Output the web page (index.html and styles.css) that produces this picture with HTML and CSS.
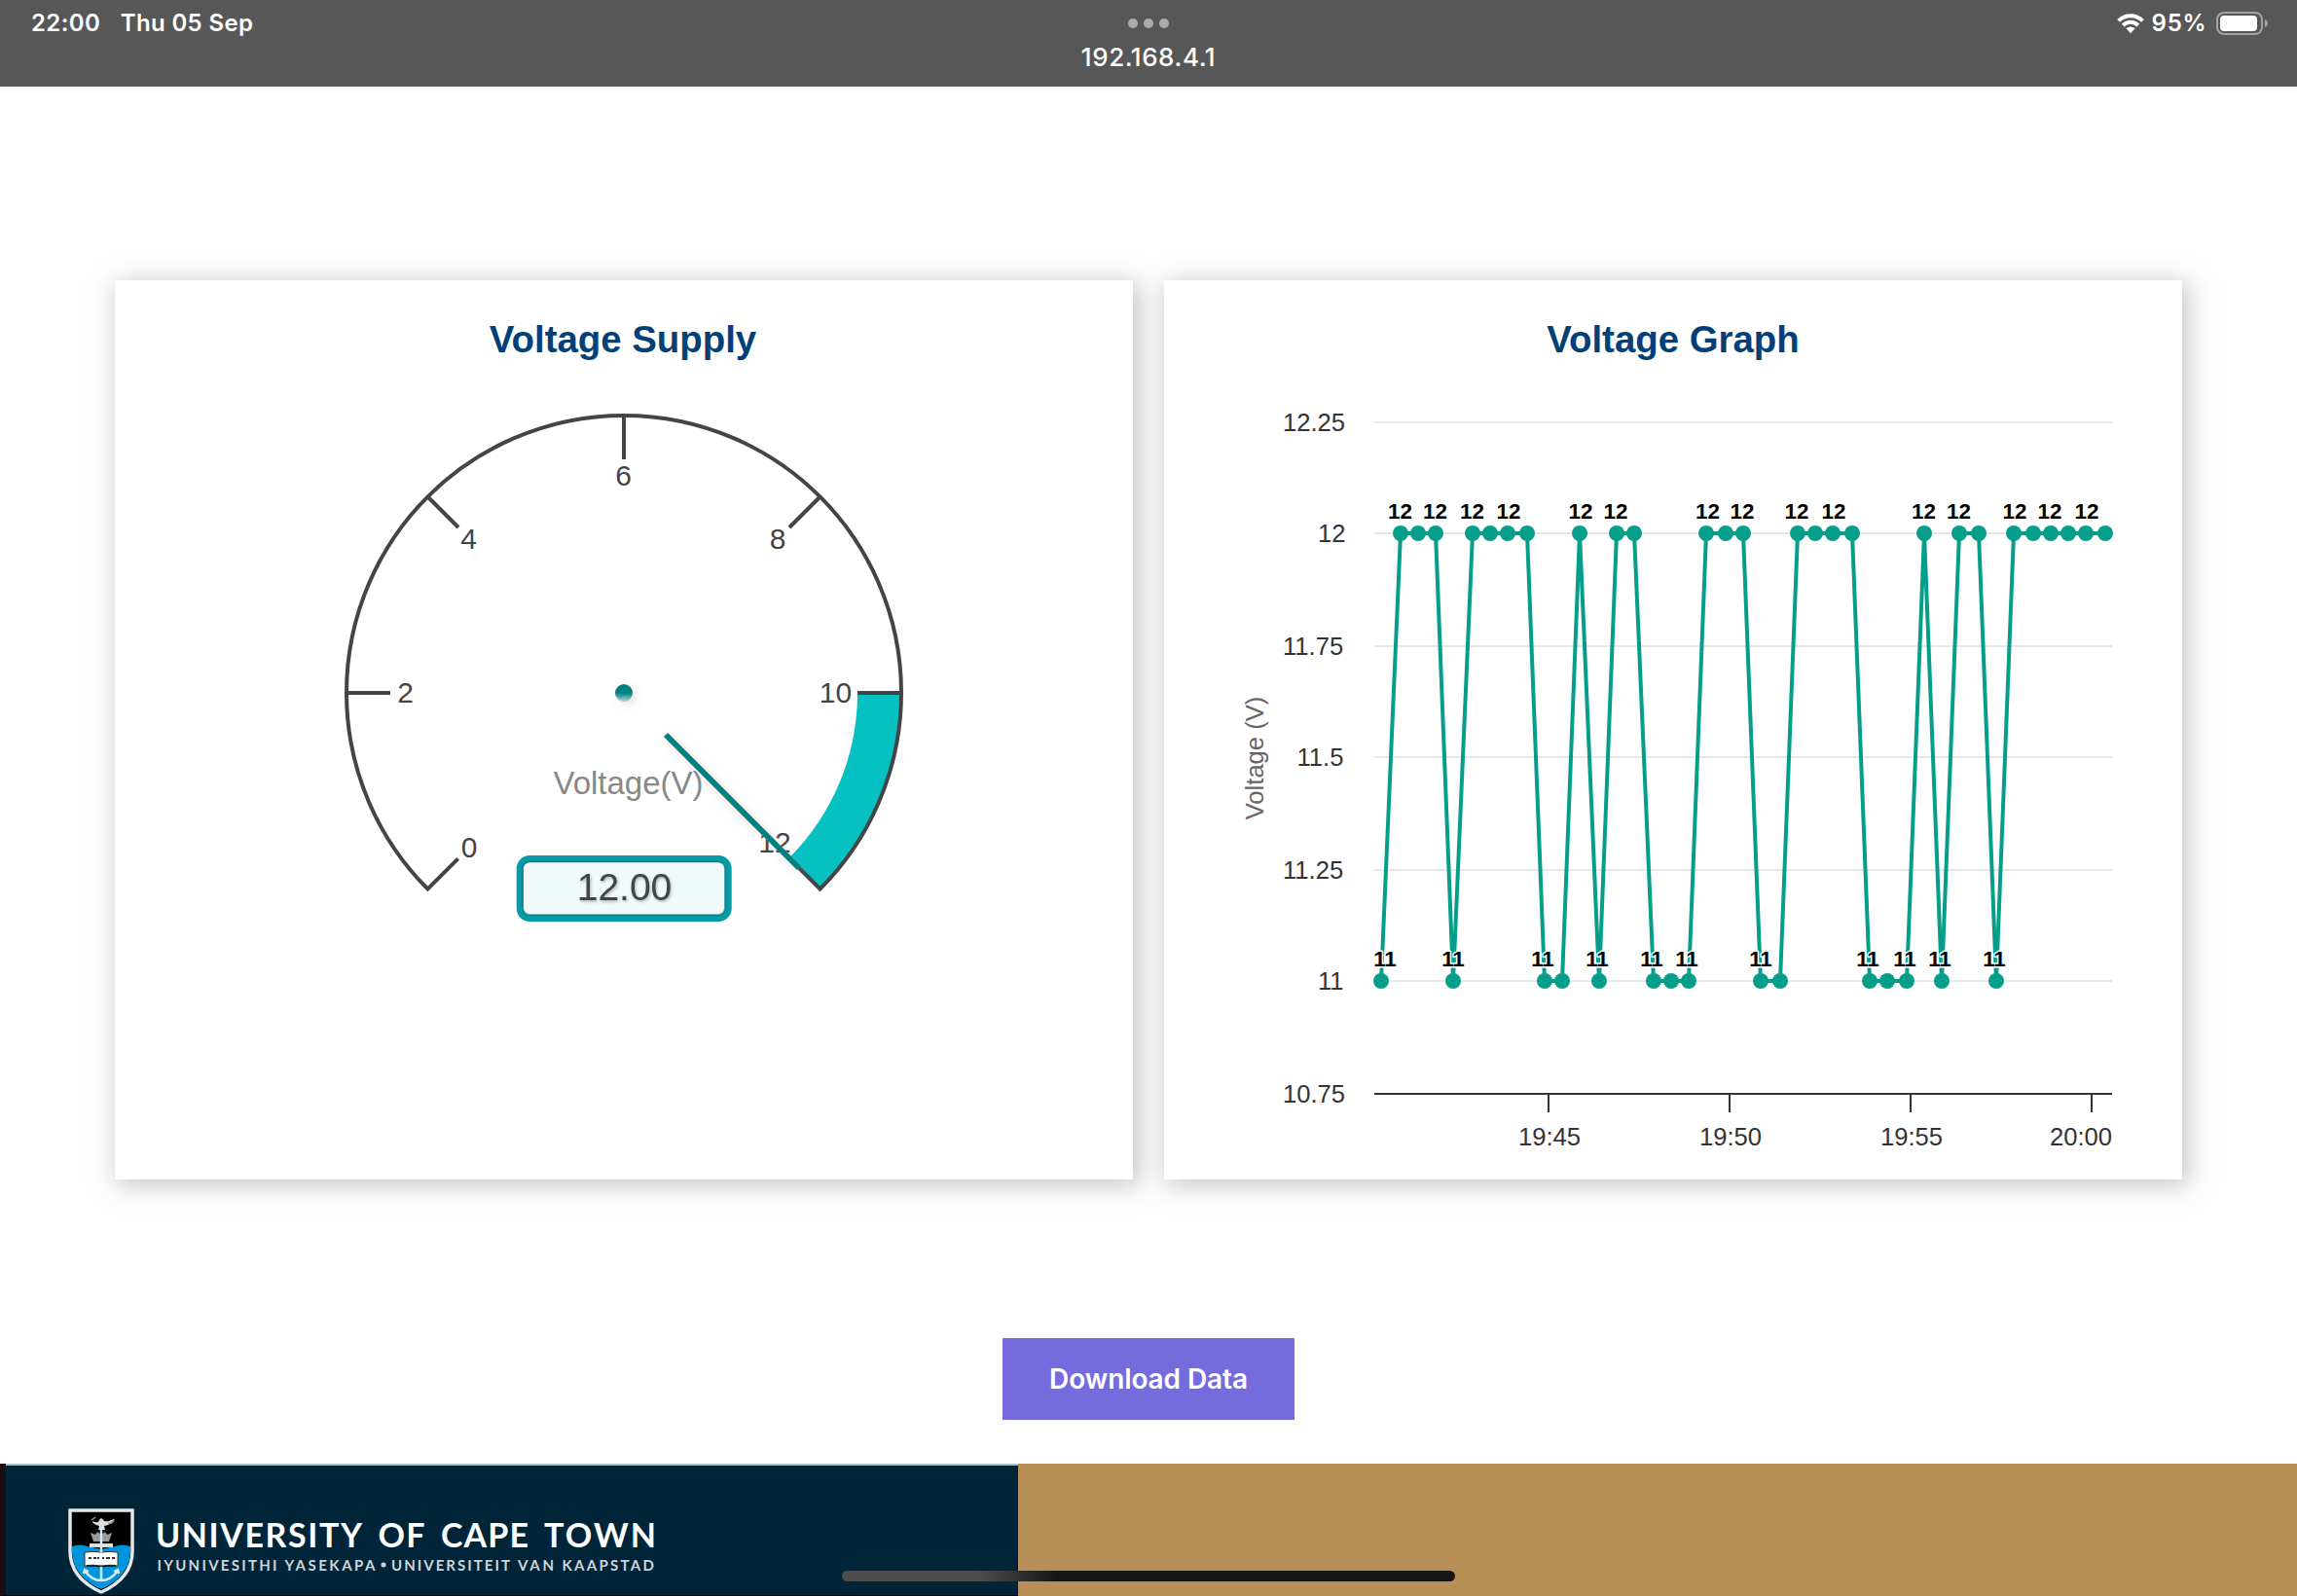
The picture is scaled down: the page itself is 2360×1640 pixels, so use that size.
FILE: index.html
```html
<!DOCTYPE html>
<html lang="en">
<head>
<meta charset="utf-8">
<title>Voltage Monitor</title>
<link rel="stylesheet" href="styles.css">
</head>
<body>
<header class="topbar">
  <div class="status-left"><span class="clock">22:00</span><span class="date">Thu 05 Sep</span></div>
  <div class="status-center">
    <div class="dots"><i></i><i></i><i></i></div>
    <div class="address">192.168.4.1</div>
  </div>
  <div class="status-right">
    <svg class="wifi" width="28" height="21" viewBox="0 0 28 21">
      <g fill="none" stroke="#fff" stroke-width="4">
        <path d="M1.6 7.3A17.6 17.6 0 0 1 26.4 7.3"/>
        <path d="M6.2 12A11 11 0 0 1 21.8 12"/>
      </g>
      <path fill="#fff" d="M9.4 15.3a6.5 6.5 0 0 1 9.2 0L14 20.2z"/>
    </svg>
    <span class="percent">95%</span>
    <svg class="battery" width="54" height="24" viewBox="0 0 54 24">
      <rect x="1" y="1" width="46" height="22" rx="7" fill="none" stroke="#a3a3a3" stroke-width="2"/>
      <rect x="4" y="4" width="38" height="16" rx="4" fill="#fff"/>
      <path d="M50 8c4 1.5 4 6.500 0 8z" fill="#a3a3a3"/>
    </svg>
  </div>
</header>

<main class="content">
  <div class="cards">
    <section class="card">
      <h2 class="card-title title-supply">Voltage Supply</h2>
      <svg class="plot" width="1046" height="812" viewBox="118 400 1046 812">
        <defs>
          <linearGradient id="pivot" x1="0" y1="0" x2="0" y2="1">
            <stop offset="0" stop-color="#008080"/><stop offset=".5" stop-color="#008080"/><stop offset="1" stop-color="#b5d6d6"/>
          </linearGradient>
          <filter id="soft" filterUnits="userSpaceOnUse" x="600" y="680" width="260" height="240">
            <feDropShadow dx="3" dy="3" stdDeviation="4" flood-color="#bc8f8f" flood-opacity=".3"/>
          </filter>
          <filter id="textShadow"><feDropShadow dx="1" dy="1.500" stdDeviation="1.5" flood-color="#000" flood-opacity=".3"/></filter>
          <filter id="edge" filterUnits="userSpaceOnUse" x="534" y="882" width="214" height="62"><feGaussianBlur stdDeviation=".8"/></filter>
        </defs>
        <path d="M881 712H926A285 285 0 0 1 842.500 913.500L810.700 881.700A240 240 0 0 0 881 712Z" fill="#05c1c2"/>
        <g fill="none" stroke="#444" stroke-width="4">
          <path d="M470.600 882.400L439.500 913.500A285 285 0 1 1 842.500 913.500L811 882"/>
          <path d="M356 712H401M439.500 510.500L471 542M641 427V472M842.500 510.500L811 542M926 712H881"/>
        </g>
        <g class="gauge-label">
          <text x="482" y="881">0</text><text x="416.500" y="722">2</text><text x="481.700" y="563.500">4</text>
          <text x="640.500" y="498.500">6</text><text x="799" y="563.500">8</text><text x="858.500" y="722">10</text><text x="796" y="875.700">12</text>
        </g>
        <text class="gauge-unit" x="568.500" y="815.700" textLength="154">Voltage(V)</text>
        <g filter="url(#soft)">
          <path d="M684 755L821 892" stroke="#008080" stroke-width="6"/>
          <circle cx="641" cy="712" r="9" fill="url(#pivot)"/>
        </g>
        <rect x="534.200" y="882.500" width="214" height="61" rx="10" fill="#f1fafb" stroke="#069ca6" stroke-width="7"/>
        <rect x="537.700" y="886" width="206.600" height="53.500" rx="6.500" fill="none" stroke="#04616b" stroke-width="1.500" filter="url(#edge)"/>
        <rect x="538" y="886.500" width="206" height="52.500" rx="6" fill="#f1fafb"/>
        <text class="gauge-value" x="641.500" y="925" filter="url(#textShadow)">12.00</text>
      </svg>
    </section>

    <section class="card">
      <h2 class="card-title">Voltage Graph</h2>
      <svg class="plot" width="1046" height="812" viewBox="1196 400 1046 812">
        <path d="M1412 434H2170M1412 548H2170M1412 664H2170M1412 778H2170M1412 894H2170M1412 1008H2170" stroke="#e6e6e6" stroke-width="2"/>
        <path d="M1412 1124H2170M1591 1124V1143M1777 1124V1143M1963 1124V1143M2149 1124V1143" stroke="#333" stroke-width="2"/>
        <defs>
          <marker id="dot" markerUnits="userSpaceOnUse" markerWidth="16" markerHeight="16" refX="8" refY="8"><circle cx="8" cy="8" r="8" fill="#059e8a"/></marker>
        </defs>
        <polyline class="series" points="1419,1008 1439,548 1457,548 1475,548 1493,1008 1513,548 1531,548 1549,548 1569,548 1587,1008 1605,1008 1623,548 1643,1008 1661,548 1679,548 1699,1008 1717,1008 1735,1008 1753,548 1773,548 1791,548 1809,1008 1829,1008 1847,548 1865,548 1883,548 1903,548 1921,1008 1939,1008 1959,1008 1977,548 1995,1008 2013,548 2033,548 2051,1008 2069,548 2089,548 2107,548 2125,548 2143,548 2163,548"/>
        <g class="axis-label">
          <text x="1318" y="443">12.25</text><text x="1354" y="557">12</text><text x="1318" y="673">11.75</text><text x="1332.500" y="787">11.5</text>
          <text x="1318" y="903">11.25</text><text x="1354" y="1017">11</text><text x="1318" y="1133">10.75</text>
          <text x="1560" y="1177">19:45</text><text x="1746" y="1177">19:50</text><text x="1932" y="1177">19:55</text><text x="2106" y="1177">20:00</text>
        </g>
        <text class="axis-title" transform="translate(1298 779) rotate(-90)">Voltage (V)</text>
        <g class="point-label">
          <text x="1438.500" y="533">12</text><text x="1474.500" y="533">12</text><text x="1512.500" y="533">12</text><text x="1550" y="533">12</text><text x="1624" y="533">12</text><text x="1660" y="533">12</text><text x="1754.500" y="533">12</text><text x="1790" y="533">12</text><text x="1846" y="533">12</text><text x="1884" y="533">12</text><text x="1976.500" y="533">12</text><text x="2012.500" y="533">12</text><text x="2070" y="533">12</text><text x="2106" y="533">12</text><text x="2144" y="533">12</text>
          <text x="1423" y="993">11</text><text x="1493" y="993">11</text><text x="1585" y="993">11</text><text x="1641" y="993">11</text><text x="1697" y="993">11</text><text x="1733" y="993">11</text><text x="1809" y="993">11</text><text x="1919" y="993">11</text><text x="1957" y="993">11</text><text x="1993" y="993">11</text><text x="2049" y="993">11</text>
        </g>
      </svg>
    </section>
  </div>
  <button class="download">Download Data</button>
</main>

<footer class="footer">
  <div class="brand">
    <svg class="shield" width="68" height="88" viewBox="0 0 68 88">
      <path d="M2 2H66V44C66 64 54 77 34 86C14 77 2 64 2 44Z" fill="#000"/>
      <path d="M4 39Q13 36 20 39L34 42L48 39Q56 36 64 39V45C63 63 52 75 34 83C16 75 5 63 4 45Z" fill="#0095da"/>
      <path d="M2 2H66V44C66 64 54 77 34 86C14 77 2 64 2 44Z" fill="none" stroke="#e4e8eb" stroke-width="3.500"/>
      <g fill="#ddd">
        <path d="M25 13q4 2 6 1q1-3 3-4q2 1 3 3q4 1 7-1l3-1l-3 4q-3 3-7 3l1 4h-7l1-4q-7-2-7-5z"/>
        <path d="M23 25l5 2l2-3l4 3l4-3l2 3l5-2l-3 9H26z" fill="#999"/>
        <path d="M22 36h24v4H22z"/>
        <path d="M17 45q9-1 17 0q8-1 17 0v14H17z" fill="#fff" stroke="#333"/>
        <path d="M19 59q8-1 15 1q7-2 15-1" fill="none" stroke="#222" stroke-width="2"/>
      </g>
      <path d="M24 12l4-3M41 15q5 1 6-4" stroke="#999" stroke-width="1.500" fill="none"/>
      <path d="M21 51h3m2 0h3m2-1v2m5-2v2m3-1h4m2 0h3" stroke="#333" stroke-width="2"/>
      <path d="M34 21V45M34 60V74M17 64Q24 74 34 74Q44 74 51 64M16 67l1-4l4 2M47 65l4-2l1 4" fill="none" stroke="#d4e9f3" stroke-width="2.500"/>
    </svg>
    <svg class="wordmark" width="560" height="80" viewBox="160 1550 560 80">
      <g class="name">
        <text x="160" y="1590" textLength="212">UNIVERSITY</text>
        <text x="388.500" y="1590" textLength="48">OF</text>
        <text x="453" y="1590" textLength="90">CAPE</text>
        <text x="559" y="1590" textLength="115">TOWN</text>
      </g>
      <g class="subname">
        <text x="161.500" y="1613.500" textLength="123">IYUNIVESITHI</text>
        <text x="292.500" y="1613.500" textLength="93">YASEKAPA</text>
        <circle cx="394" cy="1608" r="2.500"/>
        <text x="402" y="1613.500" textLength="122">UNIVERSITEIT</text>
        <text x="532" y="1613.500" textLength="37">VAN</text>
        <text x="577.500" y="1613.500" textLength="94.500">KAAPSTAD</text>
      </g>
    </svg>
  </div>
  <div class="home-indicator"></div>
</footer>
</body>
</html>
```
FILE: styles.css
```css
* { box-sizing: border-box; }

body {
  margin: 0;
  width: 2360px;
  height: 1640px;
  overflow: hidden;
  display: flex;
  flex-direction: column;
  background: #fff;
  font-family: "Liberation Sans", Arial, sans-serif;
}

.topbar {
  flex: none;
  height: 89px;
  padding: 0 30px 0 32px;
  display: grid;
  grid-template-columns: 1fr 300px 1fr;
  background: #575757;
  color: #fff;
  font: 600 24px/28px Inter, sans-serif;
}

.status-left { display: flex; gap: 20.5px; padding-top: 10px; }
.clock { letter-spacing: .4px; }
.date { letter-spacing: .35px; }
.status-center { display: flex; flex-direction: column; align-items: center; padding: 19px 2px 0 0; }
.dots { display: flex; gap: 6px; }
.dots i { width: 10px; height: 10px; border-radius: 50%; background: #adadad; }
.address { margin-top: 14px; font-size: 26px; line-height: 32px; font-weight: 500; letter-spacing: .55px; }
.status-right { display: flex; justify-content: flex-end; align-items: flex-start; padding-top: 10px; }
.wifi { margin: 4px 8px 0 0; }
.percent { letter-spacing: .8px; }
.battery { margin: 2px -1px 0 9.5px; }

.content {
  flex: none;
  height: 1415px;
  padding-top: 199px;
  display: flex;
  flex-direction: column;
  align-items: center;
}

.cards { display: grid; grid-template-columns: 1046px 1046px; gap: 32px; }
.card {
  height: 924px;
  background: #fff;
  box-shadow: 4px 4px 24px 2px rgba(140, 140, 140, .5);
}
.card-title {
  margin: 0;
  height: 112px;
  padding-top: 39px;
  text-align: center;
  font-size: 38.4px;
  line-height: 44px;
  font-weight: bold;
  color: #034078;
}
.title-supply { padding-right: 2px; }
.plot { display: block; overflow: visible; }

.gauge-label { font-size: 30px; fill: #444; text-anchor: middle; }
.gauge-unit { font-size: 33px; fill: #888; }
.gauge-value { font-size: 39px; fill: #444; text-anchor: middle; }

.series {
  fill: none;
  stroke: #059e8a;
  stroke-width: 4;
  stroke-linejoin: round;
  marker-start: url(#dot);
  marker-mid: url(#dot);
  marker-end: url(#dot);
}
.axis-label { font-size: 25.6px; fill: #333; }
.axis-title { font-size: 25.6px; fill: #666; text-anchor: middle; }
.point-label {
  font-size: 22.4px;
  font-weight: bold;
  fill: #000;
  text-anchor: middle;
  stroke: #fff;
  stroke-width: 3;
  stroke-linejoin: round;
  paint-order: stroke;
}

.download {
  margin-top: 163px;
  width: 300px;
  height: 84px;
  border: 0;
  padding: 0;
  background: #766bdc;
  color: #fff;
  font: 600 28px/34px Inter, sans-serif;
  letter-spacing: -.1px;
}

.footer {
  position: relative;
  flex: none;
  height: 136px;
  background: #b88f56;
}
.brand {
  width: 1046px;
  height: 136px;
  display: flex;
  align-items: flex-start;
  border-left: 6px solid #1a0d16;
  border-bottom: 1px solid #000c16;
  background: linear-gradient(#b3bcc1 2px, #002539 2px);
}
.shield { margin: 46px 0 0 64px; }
.wordmark { margin: 46px 0 0 22px; overflow: visible; }
.name, .subname { font-family: Lato, sans-serif; fill: #fff; }
.name { font-size: 34px; font-weight: 700; }
.subname { font-size: 15px; font-weight: 700; fill: #cdd5da; }

.home-indicator {
  position: absolute;
  left: 865px;
  top: 110px;
  width: 630px;
  height: 11px;
  border-radius: 6px;
  background: linear-gradient(90deg, #4d4d4d 140px, #171717 220px);
}
```
